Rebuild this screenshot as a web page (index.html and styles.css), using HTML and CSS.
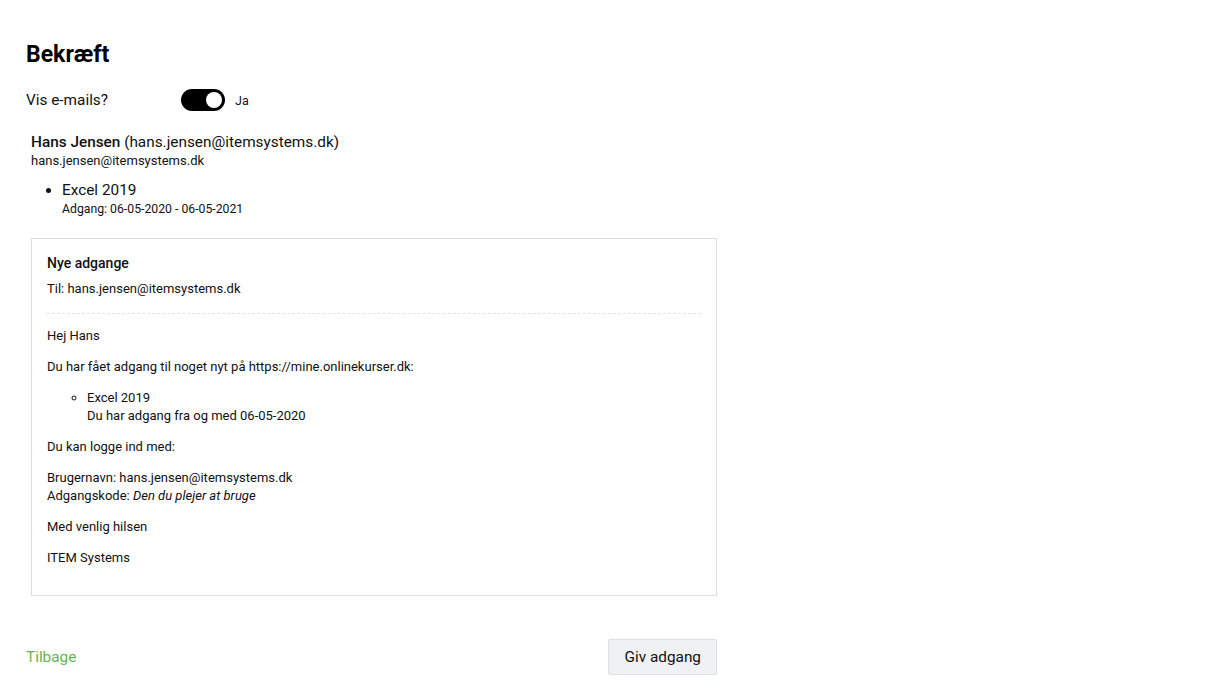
FILE: index.html
```html
<!DOCTYPE html>
<html lang="da">
<head>
<meta charset="utf-8">
<title>Bekræft</title>
<link rel="stylesheet" href="styles.css">
</head>
<body>
<div class="page">
  <h1 class="title">Bekræft</h1>
  <div class="toggle-row">
    <span class="toggle-label">Vis e-mails?</span>
    <span class="switch"><span class="knob"></span></span>
    <span class="switch-text">Ja</span>
  </div>
  <div class="user">
    <div class="user-name"><strong>Hans Jensen</strong> (hans.jensen@itemsystems.dk)</div>
    <div class="user-email">hans.jensen@itemsystems.dk</div>
    <ul class="courses">
      <li>
        <div class="course-name">Excel 2019</div>
        <div class="course-access">Adgang: 06-05-2020 - 06-05-2021</div>
      </li>
    </ul>
  </div>
  <div class="mail">
    <div class="mail-subject">Nye adgange</div>
    <div class="mail-to">Til: hans.jensen@itemsystems.dk</div>
    <div class="mail-body">
      <p>Hej Hans</p>
      <p>Du har fået adgang til noget nyt på https://mine.onlinekurser.dk:</p>
      <ul class="mail-list">
        <li>Excel 2019<br>Du har adgang fra og med 06-05-2020</li>
      </ul>
      <p>Du kan logge ind med:</p>
      <p>Brugernavn: hans.jensen@itemsystems.dk<br>Adgangskode: <em>Den du plejer at bruge</em></p>
      <p>Med venlig hilsen</p>
      <p>ITEM Systems</p>
    </div>
  </div>
  <div class="footer">
    <a class="back" href="#">Tilbage</a>
    <button class="btn">Giv adgang</button>
  </div>
</div>
</body>
</html>
```
FILE: styles.css
```css
* { box-sizing: border-box; }
html, body { margin: 0; padding: 0; background: #fff; }
body {
  font-family: Roboto, "Liberation Sans", Arial, sans-serif;
  color: #111;
}
.page {
  width: 717px;
  padding: 41px 0 0 26px;
}
.title {
  margin: 0;
  font-size: 23px;
  line-height: 28px;
  font-weight: 700;
  color: #000;
}
.toggle-row {
  display: flex;
  align-items: center;
  margin-top: 20px;
  height: 22px;
}
.toggle-label {
  font-size: 15.35px;
  width: 155px;
  color: #111;
}
.switch {
  position: relative;
  width: 44px;
  height: 22px;
  border-radius: 11px;
  background: #000;
}
.knob {
  position: absolute;
  right: 3px;
  top: 3px;
  width: 16px;
  height: 16px;
  border-radius: 50%;
  background: #fff;
}
.switch-text {
  margin-left: 10px;
  font-size: 12.5px;
}
.user {
  margin-top: 21px;
  padding-left: 5px;
}
.user-name {
  font-size: 15.35px;
  line-height: 20px;
}
.user-name strong { font-weight: 500; }
.user-email {
  font-size: 13px;
  line-height: 17px;
}
.courses {
  margin: 12px 0 0;
  padding-left: 31px;
}
.courses li { font-size: 15.35px; }
.course-name {
  font-size: 15.35px;
  line-height: 18px;
}
.course-access {
  font-size: 12.25px;
  line-height: 16px;
  margin-top: 2px;
}
.mail {
  margin: 21px 0 0 5px;
  border: 1px solid #ddd;
  padding: 14px 15px 15px;
  font-size: 13px;
  line-height: 18px;
}
.mail-subject {
  font-size: 14px;
  font-weight: 500;
  line-height: 20px;
}
.mail-to {
  margin-top: 7px;
}
.mail-body {
  margin-top: 15px;
  border-top: 1px dashed #e2e2e2;
  padding-top: 13px;
}
.mail-body p { margin: 0 0 13px; }
.mail-list {
  list-style: circle;
  margin: 0 0 13px;
  padding-left: 40px;
}
.footer {
  margin-top: 43px;
  display: flex;
  justify-content: space-between;
  align-items: center;
}
.back {
  color: #66b354;
  text-decoration: none;
  font-size: 15.35px;
}
.btn {
  font-family: inherit;
  font-size: 15.35px;
  color: #111;
  background: #f0f1f3;
  border: 1px solid #dcdfe3;
  border-radius: 2px;
  height: 36px;
  padding: 0 15px 0 16px;
}
```
